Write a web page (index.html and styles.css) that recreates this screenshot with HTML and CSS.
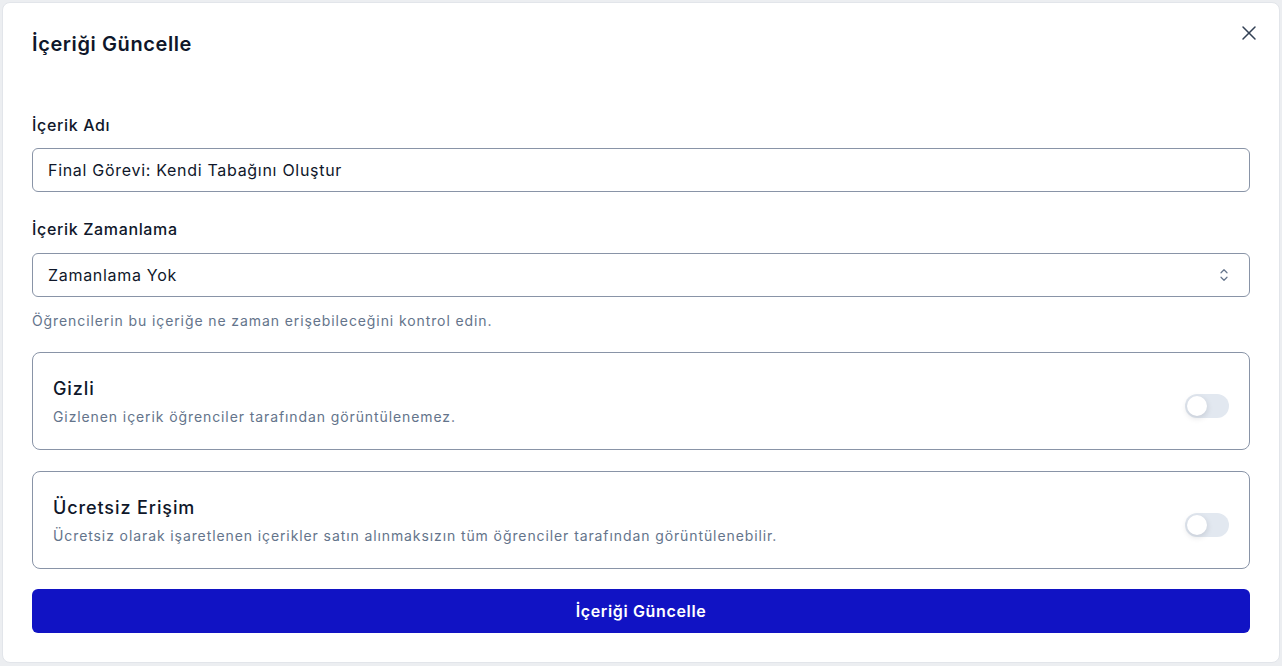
FILE: index.html
```html
<!DOCTYPE html>
<html lang="tr">
  <head>
    <meta charset="UTF-8" />
    <meta name="viewport" content="width=device-width, initial-scale=1.0" />
    <title>İçeriği Güncelle</title>
    <link rel="stylesheet" href="styles.css">
  </head>
  <body>
    <div class="modal">
      <div class="modal-header">
        <h2 class="modal-title">İçeriği Güncelle</h2>
        <button class="close-btn" aria-label="Kapat">
          <svg width="24" height="24" viewBox="0 0 24 24" fill="none" stroke="currentColor" stroke-width="1.5" stroke-linecap="round">
            <path d="M18 6 6 18" />
            <path d="m6 6 12 12" />
          </svg>
        </button>
      </div>

      <form class="form">
        <div class="field">
          <label class="label">İçerik Adı</label>
          <input class="input" type="text" value="Final Görevi: Kendi Tabağını Oluştur">
        </div>

        <div class="field field-select">
          <label class="label">İçerik Zamanlama</label>
          <div class="select">
            <span>Zamanlama Yok</span>
            <svg width="18" height="18" viewBox="0 0 24 24" fill="none" stroke="currentColor" stroke-width="1.6" stroke-linecap="round" stroke-linejoin="round">
              <path d="m8 15 4 4 4-4" />
              <path d="m8 9 4-4 4 4" />
            </svg>
          </div>
          <p class="hint">Öğrencilerin bu içeriğe ne zaman erişebileceğini kontrol edin.</p>
        </div>

        <div class="switch-card">
          <div>
            <div class="switch-title">Gizli</div>
            <div class="switch-desc">Gizlenen içerik öğrenciler tarafından görüntülenemez.</div>
          </div>
          <span class="toggle"><span class="knob"></span></span>
        </div>

        <div class="switch-card">
          <div>
            <div class="switch-title">Ücretsiz Erişim</div>
            <div class="switch-desc">Ücretsiz olarak işaretlenen içerikler satın alınmaksızın tüm öğrenciler tarafından görüntülenebilir.</div>
          </div>
          <span class="toggle"><span class="knob"></span></span>
        </div>

        <button type="button" class="submit-btn">İçeriği Güncelle</button>
      </form>
    </div>
  </body>
</html>
```

FILE: styles.css
```css
body {
  margin: 0;
  font-family: Inter, "Noto Sans", sans-serif;
  background: #eceef1;
  color: #0f172a;
}

.modal {
  margin: 2px;
  height: 661px;
  box-sizing: border-box;
  background: #fff;
  border: 1px solid #e2e5ea;
  border-radius: 8px;
  padding: 27px 29px 30px;
}

.modal-header {
  display: flex;
  justify-content: space-between;
  align-items: flex-start;
}

.modal-title {
  margin: 0;
  font-size: 20px;
  font-weight: 600;
  line-height: 28px;
  letter-spacing: 0.6px;
}

.close-btn {
  background: none;
  border: none;
  padding: 0;
  margin: -9px -11px 0 0;
  color: #334155;
  display: flex;
  cursor: pointer;
}

.form {
  display: flex;
  flex-direction: column;
  margin-top: 55px;
}

.field {
  display: flex;
  flex-direction: column;
}

.field-select {
  margin-top: 25px;
}

.field-select .label {
  margin-bottom: 12px;
}

.label {
  font-size: 16px;
  font-weight: 500;
  line-height: 24px;
  letter-spacing: 0.65px;
  margin-bottom: 11px;
}

.input,
.select {
  height: 44px;
  box-sizing: border-box;
  border: 1px solid #8994a7;
  border-radius: 6px;
  padding: 0 15px;
  font-family: Inter, "Noto Sans", sans-serif;
  font-size: 16px;
  letter-spacing: 0.7px;
  color: #0f172a;
  background: #fff;
}

.select {
  display: flex;
  align-items: center;
  justify-content: space-between;
}

.select svg {
  color: #64748b;
  margin-right: 1px;
}

.hint {
  margin: 14px 0 0;
  font-size: 14px;
  line-height: 20px;
  letter-spacing: 0.9px;
  color: #64748b;
}

.switch-card {
  margin-top: 21px;
  border: 1px solid #8994a7;
  border-radius: 8px;
  padding: 22px 20px;
  display: flex;
  justify-content: space-between;
  align-items: center;
}

.switch-title {
  font-size: 18px;
  font-weight: 500;
  line-height: 28px;
  letter-spacing: 0.9px;
}

.switch-desc {
  margin-top: 4px;
  font-size: 14px;
  line-height: 20px;
  letter-spacing: 0.9px;
  color: #64748b;
}

.toggle {
  width: 44px;
  height: 24px;
  border-radius: 12px;
  background: #e2e8f0;
  display: flex;
  align-items: center;
  padding: 2px;
  box-sizing: border-box;
  margin-top: 9px;
}

.knob {
  width: 20px;
  height: 20px;
  border-radius: 50%;
  background: #fff;
  box-shadow: 0 2px 6px rgba(15, 23, 42, 0.15);
}

.submit-btn {
  margin-top: 20px;
  height: 44px;
  border: none;
  border-radius: 6px;
  background: #1113c4;
  color: #fff;
  font-family: Inter, "Noto Sans", sans-serif;
  font-size: 16px;
  font-weight: 600;
  letter-spacing: 0.65px;
  cursor: pointer;
}
```
